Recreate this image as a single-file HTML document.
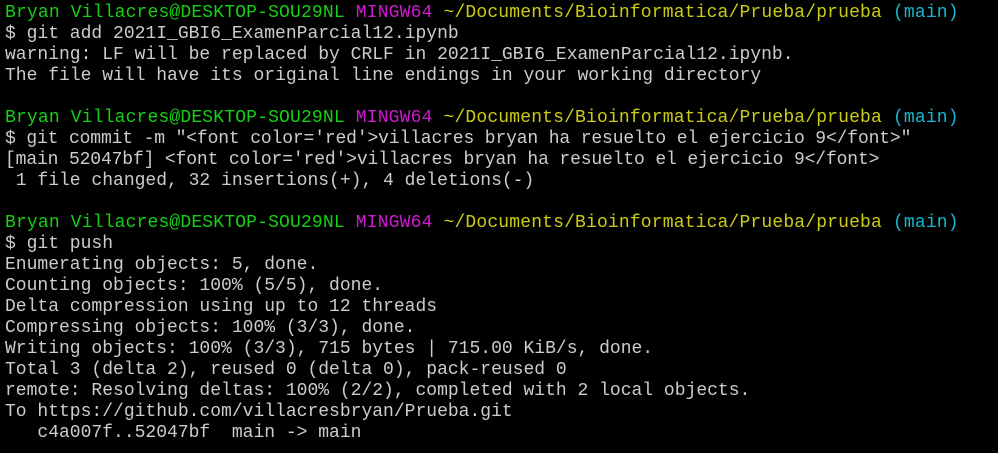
<!DOCTYPE html>
<html><head><meta charset="utf-8"><style>
html,body{margin:0;padding:0;background:#000;width:998px;height:453px;overflow:hidden}
pre{margin:0;padding:3px 0 0 5px;font-family:"Liberation Mono",monospace;font-size:18px;line-height:21px;color:#cccccc;white-space:pre}
.g{color:#16d016}.m{color:#d01ad0}.y{color:#cccc14}.c{color:#14b8d0}
.p{letter-spacing:0.16px}.n{letter-spacing:-0.14px}
</style></head><body><pre><span class="p"><span class="g">Bryan Villacres@DESKTOP-SOU29NL</span> <span class="m">MINGW64</span> <span class="y">~/Documents/Bioinformatica/Prueba/prueba</span> <span class="c">(main)</span></span>
$ git add 2021I_GBI6_ExamenParcial12.ipynb
warning: LF will be replaced by CRLF in 2021I_GBI6_ExamenParcial12.ipynb.
The file will have its original line endings in your working directory

<span class="p"><span class="g">Bryan Villacres@DESKTOP-SOU29NL</span> <span class="m">MINGW64</span> <span class="y">~/Documents/Bioinformatica/Prueba/prueba</span> <span class="c">(main)</span></span>
<span class="n">$ git commit -m "&lt;font color='red'&gt;villacres bryan ha resuelto el ejercicio 9&lt;/font&gt;"</span>
<span class="n">[main 52047bf] &lt;font color='red'&gt;villacres bryan ha resuelto el ejercicio 9&lt;/font&gt;</span>
 1 file changed, 32 insertions(+), 4 deletions(-)

<span class="p"><span class="g">Bryan Villacres@DESKTOP-SOU29NL</span> <span class="m">MINGW64</span> <span class="y">~/Documents/Bioinformatica/Prueba/prueba</span> <span class="c">(main)</span></span>
$ git push
Enumerating objects: 5, done.
Counting objects: 100% (5/5), done.
Delta compression using up to 12 threads
Compressing objects: 100% (3/3), done.
Writing objects: 100% (3/3), 715 bytes | 715.00 KiB/s, done.
Total 3 (delta 2), reused 0 (delta 0), pack-reused 0
remote: Resolving deltas: 100% (2/2), completed with 2 local objects.
To https://github.com/villacresbryan/Prueba.git
   c4a007f..52047bf  main -&gt; main</pre></body></html>
